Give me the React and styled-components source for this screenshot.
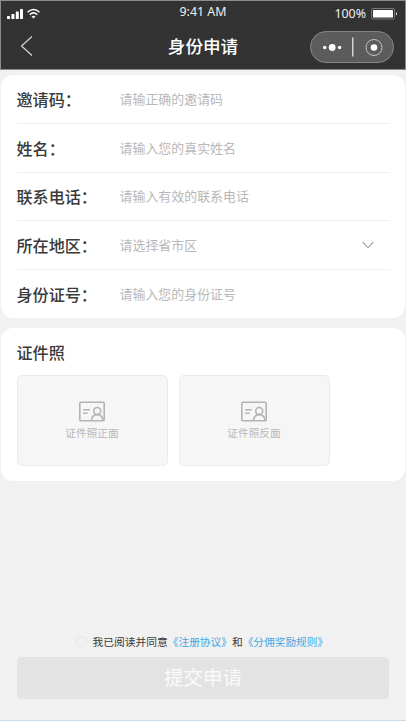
import React from "react";
import styled, { createGlobalStyle } from "styled-components";

const Global = createGlobalStyle`
  * { box-sizing: border-box; }
  body { margin: 0; background: #f1f1f1; }
  button, input { font: inherit; }
`;

const Screen = styled.main`
  width: 406px;
  height: 721px;
  display: flex;
  flex-direction: column;
  overflow: hidden;
  background: #f1f1f1;
  border-bottom: 1px solid #c9dbee;
  font-family: "Noto Sans CJK SC", sans-serif;
  color: #3a3a3a;
`;

const Header = styled.header`
  height: 70px;
  flex: none;
  background: #333;
  border: 1px solid #8b8d8c;
  color: #fff;
`;

const StatusBar = styled.div`
  height: 24px;
  display: grid;
  grid-template-columns: 1fr auto 1fr;
  align-items: center;
  padding: 0 7px 0 6px;
  font: 12.4px/22px "Noto Sans", sans-serif;
  color: #f0f0f0;
`;

const Signals = styled.div`
  display: flex;
  align-items: center;
  gap: 3px;
`;

const Time = styled.span`
  margin: -3px 0 0 1px;
`;

const Battery = styled.div`
  display: flex;
  justify-content: flex-end;
  align-items: center;
  gap: 5px;
  padding-top: 1px;
`;

const NavBar = styled.div`
  height: 44px;
  display: grid;
  grid-template-columns: 1fr auto 1fr;
  align-items: center;
  padding: 0 11px 0 19px;
`;

const BackButton = styled.button`
  width: 13px;
  height: 22px;
  padding: 0;
  border: 0;
  background: none;
  display: flex;
  margin-top: -2px;
`;

const Title = styled.h1`
  margin: -2px 8px 0 0;
  font-size: 17.6px;
  line-height: 26px;
  font-weight: 500;
`;

const Capsule = styled.div`
  justify-self: end;
  width: 84px;
  height: 32px;
  border: 1px solid #858585;
  border-radius: 16px;
  background: #5c5c5c;
  display: flex;
`;

const Card = styled.section`
  flex: none;
  background: #fff;
  border-radius: 12px;
  margin: ${(p) => p.$top}px 1px 0;
  height: ${(p) => p.$height}px;
  padding: 0 15.5px;
`;

const Row = styled.label`
  display: flex;
  align-items: center;
  height: ${(p) => (p.$last ? 48 : 48.6)}px;
  border-bottom: ${(p) => (p.$last ? "0" : "1px solid #f0f0f0")};
  padding-right: 16px;
`;

const Label = styled.span`
  width: 103px;
  flex: none;
  white-space: nowrap;
  font-size: 16.1px;
  line-height: 24px;
  font-weight: 500;
`;

const Placeholder = styled.span`
  flex: 1;
  font-size: 12.95px;
  line-height: 20px;
  color: #b8b8b8;
`;

const SectionTitle = styled.h2`
  margin: 0;
  padding-top: 12px;
  height: 46.8px;
  font-size: 16.1px;
  line-height: 24px;
  font-weight: 500;
`;

const Uploads = styled.div`
  display: flex;
  gap: 11px;
`;

const Upload = styled.button`
  width: 151px;
  height: 90.5px;
  padding: 1px 0 0;
  border: 1px solid #ebebeb;
  border-radius: 5px;
  background: #f6f6f6;
  color: #b8b8b8;
  display: flex;
  flex-direction: column;
  align-items: center;
  justify-content: center;
  gap: 3px;
  font-size: 10.7px;
  line-height: 16px;
`;

const Footer = styled.footer`
  margin-top: auto;
  padding: 0 17px 21.5px;
`;

const Agreement = styled.div`
  display: flex;
  align-items: center;
  height: 16px;
  margin: 0 0 7px 59px;
  font-size: 10.75px;
  line-height: 16px;
  white-space: nowrap;
`;

const Radio = styled.span`
  width: 11px;
  height: 11px;
  margin-right: 5.5px;
  border: 1px solid #e5e5e5;
  border-radius: 50%;
`;

const Link = styled.span`
  color: #45a5e5;
  font-size: 10.7px;
`;

const Submit = styled.button`
  display: block;
  width: 100%;
  height: 42px;
  padding: 0 0 1px;
  border: 0;
  border-radius: 5px;
  background: #e3e3e3;
  color: #fafafa;
  font-size: 19.5px;
  line-height: 30px;
`;

const SignalIcon = () => (
  <svg width="17" height="11" viewBox="0 0 17 11" fill="#fff">
    <rect x="0" y="8" width="3" height="3" rx=".6" />
    <rect x="4.4" y="6" width="3" height="5" rx=".6" />
    <rect x="8.8" y="3.5" width="3" height="7.5" rx=".6" />
    <rect x="13" y="1" width="3" height="10" rx=".6" />
  </svg>
);

const WifiIcon = () => (
  <svg width="13" height="11" viewBox="0 0 13 11" fill="none" stroke="#fff" strokeWidth="1.5">
    <path d="M.5 4.2Q6.5-1.2 12.5 4.2M2.8 6.6Q6.5 3.2 10.2 6.6" />
    <path d="M4.5 8.5Q6.5 6.8 8.5 8.5L6.5 10.6Z" fill="#fff" stroke="none" />
  </svg>
);

const BatteryIcon = () => (
  <svg width="27" height="12" viewBox="0 0 27 12">
    <rect x=".5" y=".5" width="23" height="10.5" rx="1.5" fill="none" stroke="#777" />
    <rect x="2" y="2" width="20" height="7.5" rx=".5" fill="#fff" />
    <path d="M25 4Q27 5.8 25 7.5Z" fill="#fff" />
  </svg>
);

const BackIcon = () => (
  <svg width="13" height="22" viewBox="0 0 13 22" fill="none" stroke="#ddd" strokeWidth="1.1">
    <path d="M12 1.5 1.5 11 12 20.5" />
  </svg>
);

const CapsuleIcon = () => (
  <svg width="82" height="30" viewBox="0 0 82 30" fill="#fff">
    <circle cx="13.7" cy="15.5" r="1.7" />
    <circle cx="21.2" cy="15.5" r="3.4" />
    <circle cx="28.6" cy="15.5" r="1.7" />
    <rect x="41" y="5.5" width="1.5" height="19" fill="#d2d2d2" />
    <circle cx="63" cy="15.5" r="3.3" />
    <circle cx="63" cy="15.5" r="8" fill="none" stroke="#c4c4c4" />
  </svg>
);

const ChevronIcon = () => (
  <svg width="12" height="8" viewBox="0 0 12 8" fill="none" stroke="#a6a6a6" strokeWidth="1.1">
    <path d="M.7 1 6 6.6 11.3 1" />
  </svg>
);

const IdCardIcon = () => (
  <svg width="26" height="21" viewBox="0 0 26 21" fill="none" stroke="#b4b4b4" strokeWidth="1.6">
    <rect x=".8" y="1.3" width="24.4" height="18.4" rx="1" />
    <path d="M4.2 8.8H10.8M4.2 12.2H8.6" strokeWidth="1.4" />
    <circle cx="18.2" cy="10" r="3.5" />
    <path d="M12.4 19.4C12.8 16 14.9 13.6 18.2 13.6S23.6 16 24 19.4" />
  </svg>
);

const fields = [
  { label: "邀请码：", hint: "请输正确的邀请码" },
  { label: "姓名：", hint: "请输入您的真实姓名" },
  { label: "联系电话：", hint: "请输入有效的联系电话" },
  { label: "所在地区：", hint: "请选择省市区", select: true },
  { label: "身份证号：", hint: "请输入您的身份证号" },
];

export default function App() {
  return (
    <>
      <Global />
      <Screen>
        <Header>
          <StatusBar>
            <Signals>
              <SignalIcon />
              <WifiIcon />
            </Signals>
            <Time>9:41 AM</Time>
            <Battery>
              <span>100%</span>
              <BatteryIcon />
            </Battery>
          </StatusBar>
          <NavBar>
            <BackButton aria-label="返回">
              <BackIcon />
            </BackButton>
            <Title>身份申请</Title>
            <Capsule>
              <CapsuleIcon />
            </Capsule>
          </NavBar>
        </Header>
        <Card $top={5.4} $height={242.6}>
          {fields.map((f, i) => (
            <Row key={f.label} $last={i === fields.length - 1}>
              <Label>{f.label}</Label>
              <Placeholder>{f.hint}</Placeholder>
              {f.select && <ChevronIcon />}
            </Row>
          ))}
        </Card>
        <Card $top={10.5} $height={152.5}>
          <SectionTitle>证件照</SectionTitle>
          <Uploads>
            {["证件照正面", "证件照反面"].map((text) => (
              <Upload key={text}>
                <IdCardIcon />
                <span>{text}</span>
              </Upload>
            ))}
          </Uploads>
        </Card>
        <Footer>
          <Agreement>
            <Radio />
            <span>我已阅读并同意</span>
            <Link>《注册协议》</Link>
            <span>和</span>
            <Link>《分佣奖励规则》</Link>
          </Agreement>
          <Submit>提交申请</Submit>
        </Footer>
      </Screen>
    </>
  );
}
